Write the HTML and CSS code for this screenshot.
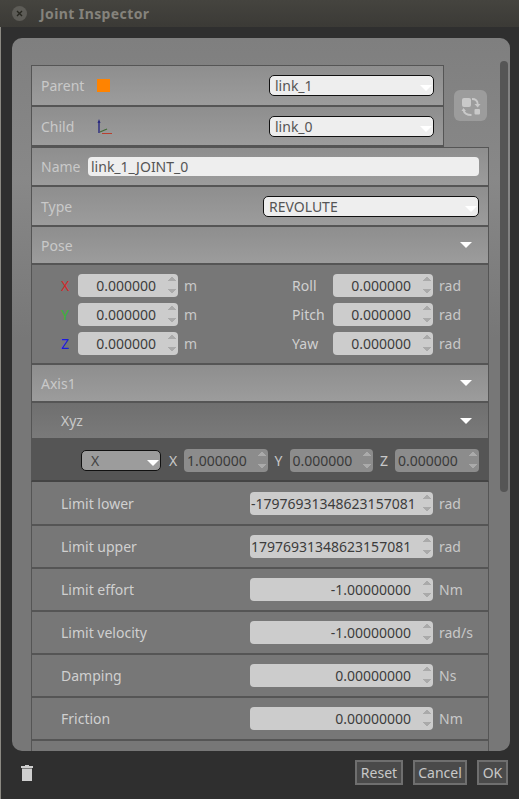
FILE: index.html
```html
<!DOCTYPE html>
<html lang="en">
<head>
  <meta charset="UTF-8" />
  <title>Joint Inspector</title>
  <link rel="stylesheet" href="styles.css">
</head>
<body>
  <div class="titlebar">
    <span class="close-btn">
      <svg width="7" height="7" viewBox="0 0 7 7">
        <path d="M1 1L6 6M6 1L1 6" stroke="#26261f" stroke-width="1.4" fill="none"/>
      </svg>
    </span>
    <span class="title">Joint Inspector</span>
  </div>

  <div class="dialog">
    <div class="panel">
      <div class="scrollbar"></div>
      <div class="links">
        <div class="link-rows">
          <div class="row row-link">
            <span class="lbl lbl-link">Parent</span>
            <span class="swatch"></span>
            <div class="combo combo-link">link_1<i class="arrow"></i></div>
          </div>
          <div class="row row-link row-child">
            <span class="lbl lbl-link">Child</span>
            <svg class="axes" width="16" height="15" viewBox="0 0 16 15">
              <path d="M2 2V14" stroke="#2a2a80" stroke-width="1.4" fill="none"/>
              <path d="M0.5 4L2 0L3.5 4Z" fill="#2a2a80"/>
              <path d="M3 13L10 10" stroke="#3f6a35" stroke-width="1.2" fill="none"/>
              <path d="M5 14.5H15" stroke="#b8402e" stroke-width="1.2" fill="none"/>
            </svg>
            <div class="combo combo-link">link_0<i class="arrow"></i></div>
          </div>
        </div>
        <button class="swap-btn">
          <svg width="20" height="20" viewBox="0 0 20 20">
            <rect x="1" y="2" width="9" height="9" rx="2" fill="#c9c9c9"/>
            <rect x="13.5" y="13" width="5.5" height="5.5" rx="1" fill="#c9c9c9"/>
            <path d="M11 3C14.5 3 16.5 5 16.7 8" stroke="#c9c9c9" stroke-width="1.8" fill="none"/>
            <path d="M13.5 8H19.5L16.7 11.5Z" fill="#c9c9c9"/>
            <path d="M2.5 14C3 17 5.5 19 10.5 19" stroke="#c9c9c9" stroke-width="1.8" fill="none"/>
            <path d="M0.5 15H5L2.5 12Z" fill="#c9c9c9"/>
          </svg>
        </button>
      </div>

      <div class="row row-name">
        <span class="lbl lbl-name">Name</span>
        <div class="text-input">link_1_JOINT_0</div>
      </div>
      <div class="row row-type">
        <span class="lbl lbl-type">Type</span>
        <div class="combo combo-type">REVOLUTE<i class="arrow"></i></div>
      </div>

      <div class="row header"><span class="lbl">Pose</span><i class="tri"></i></div>
      <div class="pose">
        <div class="pose-col">
          <div class="pose-line"><span class="axis-x">X</span><div class="spin spin-pose">0.000000<i class="spin-arrows"></i></div><span class="unit">m</span></div>
          <div class="pose-line"><span class="axis-y">Y</span><div class="spin spin-pose">0.000000<i class="spin-arrows"></i></div><span class="unit">m</span></div>
          <div class="pose-line"><span class="axis-z">Z</span><div class="spin spin-pose">0.000000<i class="spin-arrows"></i></div><span class="unit">m</span></div>
        </div>
        <div class="pose-col pose-col-rot">
          <div class="pose-line"><span class="rot">Roll</span><div class="spin spin-pose">0.000000<i class="spin-arrows"></i></div><span class="unit">rad</span></div>
          <div class="pose-line"><span class="rot">Pitch</span><div class="spin spin-pose">0.000000<i class="spin-arrows"></i></div><span class="unit">rad</span></div>
          <div class="pose-line"><span class="rot">Yaw</span><div class="spin spin-pose">0.000000<i class="spin-arrows"></i></div><span class="unit">rad</span></div>
        </div>
      </div>

      <div class="row header header-axis"><span class="lbl">Axis1</span><i class="tri"></i></div>
      <div class="row sub-header"><span class="lbl">Xyz</span><i class="tri"></i></div>
      <div class="xyz">
        <div class="combo combo-xyz">X<i class="arrow"></i></div>
        <span class="xyz-lbl">X</span>
        <div class="spin spin-xyz">1.000000<i class="spin-arrows"></i></div>
        <span class="xyz-lbl">Y</span>
        <div class="spin spin-xyz">0.000000<i class="spin-arrows"></i></div>
        <span class="xyz-lbl">Z</span>
        <div class="spin spin-xyz">0.000000<i class="spin-arrows"></i></div>
      </div>

      <div class="row prop prop-first"><span class="lbl">Limit lower</span><div class="spin spin-prop"><span class="clip">-17976931348623157081</span><i class="spin-arrows"></i></div><span class="unit">rad</span></div>
      <div class="row prop"><span class="lbl">Limit upper</span><div class="spin spin-prop"><span class="clip">17976931348623157081</span><i class="spin-arrows"></i></div><span class="unit">rad</span></div>
      <div class="row prop"><span class="lbl">Limit effort</span><div class="spin spin-prop">-1.00000000<i class="spin-arrows"></i></div><span class="unit">Nm</span></div>
      <div class="row prop"><span class="lbl">Limit velocity</span><div class="spin spin-prop">-1.00000000<i class="spin-arrows"></i></div><span class="unit">rad/s</span></div>
      <div class="row prop"><span class="lbl">Damping</span><div class="spin spin-prop">0.00000000<i class="spin-arrows"></i></div><span class="unit">Ns</span></div>
      <div class="row prop"><span class="lbl">Friction</span><div class="spin spin-prop">0.00000000<i class="spin-arrows"></i></div><span class="unit">Nm</span></div>
      <div class="row prop"></div>
    </div>

    <div class="footer">
      <svg class="trash" width="12" height="16" viewBox="0 0 12 16">
        <path d="M4 0H8V1H12V3H0V1H4Z" fill="#cfcfcf"/>
        <path d="M1 3.5H11V16H1Z" fill="#cfcfcf"/>
      </svg>
      <div class="btns">
        <button class="btn btn-reset">Reset</button>
        <button class="btn btn-cancel">Cancel</button>
        <button class="btn btn-ok">OK</button>
      </div>
    </div>
  </div>
</body>
</html>
```

FILE: styles.css
```css
* {
  box-sizing: border-box;
}

html, body {
  margin: 0;
  padding: 0;
  height: 100%;
  overflow: hidden;
  background-color: #2f2f2f;
  font-family: "Noto Sans", "Open Sans", sans-serif;
  font-size: 14px;
  color: #d0d0d0;
}

/* window title */
.titlebar {
  height: 27px;
  display: flex;
  align-items: center;
  padding: 0 0 1px 12px;
  background: linear-gradient(#45443f, #3b3a36);
}

.close-btn {
  display: flex;
  align-items: center;
  justify-content: center;
  width: 15px;
  height: 15px;
  border-radius: 50%;
  background-color: #5d5c57;
}

.title {
  margin-left: 13px;
  font-weight: bold;
  color: #85837c;
  letter-spacing: 0.4px;
}

.dialog {
  height: 772px;
  padding: 11px 9px 0 11px;
  border-left: 1px solid #8b8982;
}

.panel {
  position: relative;
  height: 713px;
  padding: 27px 0 0 19px;
  overflow: hidden;
  border-radius: 10px;
  background: linear-gradient(#7f7f7f, #888 140px, #777 300px, #777);
}

.scrollbar {
  position: absolute;
  top: 23px;
  right: 2px;
  width: 8px;
  height: 431px;
  border-radius: 4px;
  background-color: #555;
}

/* rows */
.row {
  display: flex;
  align-items: center;
  width: 458px;
  border-left: 1px solid #555;
  border-right: 1px solid #555;
  border-bottom: 2px solid #555;
  background: linear-gradient(#8e8e8e, #9c9c9c);
}

.lbl {
  color: #c9c9c9;
}

.links {
  display: flex;
  align-items: center;
}

.link-rows {
  width: 413px;
  border-top: 1px solid #555;
}

.row-link {
  width: 413px;
  height: 41px;
}

.row-child {
  height: 40px;
}

.lbl-link {
  width: 56px;
  margin-left: 9px;
}

.swatch {
  width: 13px;
  height: 13px;
  background-color: #ff8300;
}

.axes {
  margin-right: -3px;
}

.combo {
  position: relative;
  height: 21px;
  padding-left: 5px;
  line-height: 20px;
  border: 1px solid #111;
  border-radius: 5px;
  background-color: #eee;
  color: #555;
}

.combo-link {
  width: 165px;
  margin-left: auto;
  margin-right: 9px;
}

.arrow {
  position: absolute;
  right: 1px;
  top: 9px;
  width: 0;
  height: 0;
  border-left: 6px solid transparent;
  border-right: 6px solid transparent;
  border-top: 6px solid #fff;
}

.swap-btn {
  width: 33px;
  height: 31px;
  margin-left: 10px;
  margin-top: -1px;
  padding: 0;
  border: none;
  border-radius: 6px;
  background-color: #9c9c9c;
  display: flex;
  align-items: center;
  justify-content: center;
}

.row-name {
  height: 40px;
  border-top: 1px solid #555;
}

.lbl-name {
  width: 47px;
  margin-left: 9px;
}

.text-input {
  width: 391px;
  height: 19px;
  padding-left: 3px;
  line-height: 19px;
  border-radius: 4px;
  background-color: #eee;
  color: #555;
}

.row-type {
  height: 40px;
}

.lbl-type {
  margin-left: 9px;
}

.combo-type {
  width: 216px;
  margin-left: auto;
  margin-right: 9px;
}

.header {
  height: 38px;
  padding-left: 9px;
  padding-right: 16px;
  justify-content: space-between;
}

.tri {
  width: 0;
  height: 0;
  border-left: 6px solid transparent;
  border-right: 6px solid transparent;
  border-top: 6px solid #fff;
}

/* pose block */
.pose {
  display: flex;
  width: 458px;
  height: 100px;
  padding-top: 9px;
  border-left: 1px solid #555;
  border-right: 1px solid #555;
  border-bottom: 2px solid #555;
  background-color: #777;
}

.pose-col {
  display: flex;
  flex-direction: column;
  gap: 6px;
  padding-left: 29px;
}

.pose-col-rot {
  padding-left: 95px;
}

.pose-line {
  display: flex;
  align-items: center;
  height: 23px;
}

.pose-line span:first-child {
  width: 17px;
}

.axis-x {
  color: #d22a2a;
}

.axis-y {
  color: #36b536;
}

.axis-z {
  color: #1a1ae0;
}

.pose-line span.rot {
  width: 41px;
  color: #d0d0d0;
}

.unit {
  margin-left: 6px;
  color: #c8c8c8;
}

.spin {
  position: relative;
  height: 23px;
  padding-right: 22px;
  line-height: 23px;
  text-align: right;
  border-radius: 4px;
  background-color: #ccc;
  color: #3c3c3c;
  white-space: nowrap;
}

.spin-pose {
  width: 100px;
}

.spin-arrows {
  position: absolute;
  right: 2px;
  top: 3px;
  width: 8px;
  height: 16px;
  background:
    linear-gradient(to bottom right, transparent 49%, #aaa 50%) left top / 4px 4px no-repeat,
    linear-gradient(to bottom left, transparent 49%, #aaa 50%) right top / 4px 4px no-repeat,
    linear-gradient(to top right, transparent 49%, #aaa 50%) left bottom / 4px 4px no-repeat,
    linear-gradient(to top left, transparent 49%, #aaa 50%) right bottom / 4px 4px no-repeat;
}

.sub-header {
  height: 35px;
  padding-left: 29px;
  padding-right: 16px;
  justify-content: space-between;
  border-bottom: none;
  background: linear-gradient(#6f6f6f, #7a7a7a);
}

/* xyz strip */
.xyz {
  display: flex;
  align-items: center;
  width: 458px;
  height: 44px;
  padding: 3px 0 0 49px;
  border-left: 1px solid #555;
  border-right: 1px solid #555;
  border-bottom: 2px solid #444;
  background-color: #555;
}

.combo-xyz {
  width: 80px;
  height: 21px;
  margin-right: 1px;
  padding-left: 9px;
  background-color: #9c9c9c;
  color: #444;
}

.xyz-lbl {
  width: 22px;
  text-align: center;
  color: #c8c8c8;
}

.spin-xyz {
  width: 83.5px;
  padding-right: 0;
  padding-left: 3px;
  text-align: left;
  background-color: #8c8c8c;
  color: #3a3a3a;
}

/* limit rows */
.prop {
  height: 43px;
  padding-left: 29px;
  background: #777;
}

.prop-first {
  height: 44px;
}

.prop .lbl {
  width: 189px;
  color: #d0d0d0;
}

.spin-prop {
  width: 183px;
}

.clip {
  display: block;
  overflow: hidden;
  text-align: left;
  margin-left: 1px;
  margin-right: -6px;
}

/* bottom bar */
.footer {
  display: flex;
  align-items: flex-start;
  justify-content: space-between;
  height: 48px;
  padding: 9px 2px 0 9px;
}

.trash {
  margin-top: 5px;
}

.btns {
  display: flex;
  gap: 10px;
}

.btn {
  height: 25px;
  padding: 0;
  font-family: inherit;
  font-size: 14px;
  color: #c8c8c8;
  background-color: #4a4a4a;
  border: 2px solid #6f6f6f;
}

.btn-reset {
  width: 48px;
}

.btn-cancel {
  width: 54px;
}

.btn-ok {
  width: 31px;
}
```
